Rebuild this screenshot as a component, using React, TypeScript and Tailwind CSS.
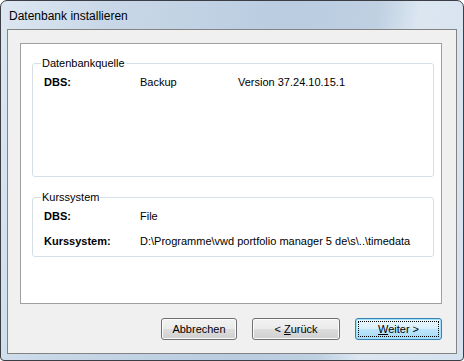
import type { ReactNode } from "react";

const font = "font-['Liberation_Sans',Arial,sans-serif]";

function Button({
  children,
  width,
  primary = false,
}: {
  children: ReactNode;
  width: string;
  primary?: boolean;
}) {
  return (
    <button
      className={`${width} flex h-[22px] items-center justify-center rounded-[3px] border text-[11px] text-black ${
        primary
          ? "border-[#3c7fb1] bg-[linear-gradient(#eaf6fd_0%,#d9f0fc_50%,#bee6fd_51%,#a7d9f5_100%)] p-[2px] shadow-[inset_0_0_0_1px_#9fe2fb]"
          : "border-[#707070] bg-[linear-gradient(#f2f2f2_0%,#ebebeb_50%,#dddddd_51%,#cfcfcf_100%)] shadow-[inset_0_0_0_1px_#fcfcfc]"
      }`}
    >
      {primary ? (
        <span className="flex h-full w-full items-center justify-center border border-dotted border-black">
          <span>{children}</span>
        </span>
      ) : (
        <span>{children}</span>
      )}
    </button>
  );
}

function Group({
  title,
  children,
  className = "",
}: {
  title: string;
  children: ReactNode;
  className?: string;
}) {
  return (
    <fieldset
      className={`rounded-[3px] border border-[#d5dfe5] pl-[11px] ${className}`}
    >
      <legend className="-ml-[3px] px-[1px] text-[11px] leading-[13px] text-black">
        {title}
      </legend>
      {children}
    </fieldset>
  );
}

function Row({
  label,
  value,
  extra,
  className = "",
}: {
  label: string;
  value: string;
  extra?: string;
  className?: string;
}) {
  return (
    <div className={`flex h-[13px] items-center text-[11px] leading-[13px] ${className}`}>
      <span className="w-[96px] font-bold text-black">{label}</span>
      <span className="w-[98px] whitespace-nowrap text-black">{value}</span>
      {extra && <span className="whitespace-nowrap text-black">{extra}</span>}
    </div>
  );
}

export default function App() {
  return (
    <div className={`${font} h-[361px] w-[464px] bg-white`}>
      <div className="flex h-[361px] w-[464px] flex-col rounded-t-[7px] rounded-b-[4px] border border-[#3b3f45] bg-[linear-gradient(100deg,#dde7f2_0%,#c9d8e8_20%,#b9cce0_55%,#bfd0e2_72%,#dbe6f1_80%,#d6e2ef_100%)]">
        {/* Title bar */}
        <div className="flex h-[28px] shrink-0 items-center pl-[8px] pt-[2px] text-[12px] text-black">
          Datenbank installieren
        </div>

        {/* Client area */}
        <div className="mx-[6px] flex h-[325px] flex-col border border-[#838383] bg-[#f0f0f0] pl-[12px] pr-[14px] pt-[13px]">
          <div className="flex h-[261px] flex-col border border-[#a0a0a0] bg-white pl-[11px] pr-[7px] pt-[13px]">
            <Group title="Datenbankquelle" className="h-[120px]">
              <Row label="DBS:" value="Backup" extra="Version 37.24.10.15.1" className="mt-[6px]" />
            </Group>
            <Group title="Kurssystem" className="mt-[14px] h-[66px]">
              <Row label="DBS:" value="File" className="mt-[6px]" />
              <Row
                label="Kurssystem:"
                value="D:\Programme\vwd portfolio manager 5 de\s\..\timedata"
                className="mt-[12px]"
              />
            </Group>
          </div>

          <div className="mt-[14px] flex justify-end gap-[15px]">
            <Button width="w-[76px]">Abbrechen</Button>
            <Button width="w-[88px]">
              {"< "}
              <span className="underline">Z</span>urück
            </Button>
            <Button width="w-[87px]" primary>
              <span className="underline">W</span>eiter {">"}
            </Button>
          </div>
        </div>
      </div>
    </div>
  );
}
